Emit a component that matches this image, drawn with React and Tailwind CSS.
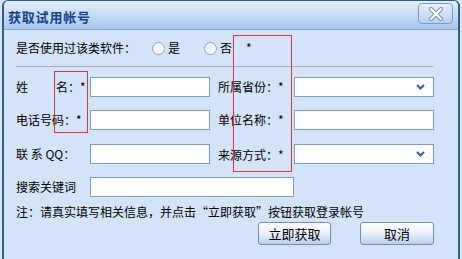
const FONT = { fontFamily: '"SimSun", "Noto Sans CJK SC", sans-serif' };

function Field({ w = 'w-[120px]' }) {
  return <div className={`${w} h-[20px] bg-white border border-[#7f9db9]`} />;
}

function Select() {
  return (
    <div className="w-[140px] h-[20px] bg-white border border-[#7f9db9] flex items-center justify-end pr-[8px]">
      <svg width="9" height="6" viewBox="0 0 9 6">
        <path d="M1 1 L4.5 4.5 L8 1" fill="none" stroke="#2d5fb0" strokeWidth="2" />
      </svg>
    </div>
  );
}

function Radio({ label }) {
  return (
    <div className="flex items-center gap-[3px]">
      <span className="w-[13px] h-[13px] rounded-full border border-[#8ea6c3] bg-gradient-to-br from-[#e8eef5] to-white" />
      <span>{label}</span>
    </div>
  );
}

function Label({ children, className = '' }) {
  return <div className={`w-[74px] shrink-0 whitespace-pre ${className}`}>{children}</div>;
}

function Button({ children, w }) {
  return (
    <div
      className={`${w} h-[23px] rounded-[3px] border border-[#6f8fbb] bg-gradient-to-b from-white via-[#e9f0fa] to-[#b9cfec] flex items-center justify-center text-[13px] text-black`}
    >
      {children}
    </div>
  );
}

export default function App() {
  return (
    <div className="w-[462px] h-[259px] bg-[#d9e6f5] overflow-hidden text-[12px] text-black" style={FONT}>
      <div className="relative ml-[2px] mr-[2px] h-[259px] rounded-t-[6px] border-x-2 border-t border-[#2e5c9a] bg-[#d3e3f8]">
        {/* title bar */}
        <div className="h-[29px] rounded-t-[5px] bg-gradient-to-b from-[#e4effc] via-[#c6dcf6] to-[#a7c5ec] border-b border-[#86a9d8] flex items-center pl-[4px]">
          <span className="text-[13px] font-bold text-[#15428b] tracking-[0.8px] mt-[3px]">获取试用帐号</span>
          <div className="ml-auto mr-[5px] self-start w-[35px] h-[21px] mt-[2px] rounded-[4px] border border-[#7d9bc4] bg-gradient-to-b from-[#e6effb] to-[#b9d0ee] flex items-center justify-center">
            <svg width="16" height="14" viewBox="0 0 16 14">
              <path d="M3 2 L13 12 M13 2 L3 12" stroke="#7d8fa8" strokeWidth="4" strokeLinecap="round" />
              <path d="M3 2 L13 12 M13 2 L3 12" stroke="#ffffff" strokeWidth="2.2" strokeLinecap="round" />
            </svg>
          </div>
        </div>

        <div className="pl-[12px]">
          <div className="h-[36px] flex items-center">
            <span className="w-[136px]">是否使用过该类软件：</span>
            <Radio label="是" />
            <div className="ml-[24px]"><Radio label="否" /></div>
            <span className="ml-[14px]">*</span>
          </div>
          <div className="w-[417px] h-px bg-[#a3acb7]" />

          <div className="mt-[10px] h-[20px] flex items-center">
            <Label>
              <span>姓</span>
              <span className="ml-[28px]">名：*</span>
            </Label>
            <Field />
            <Label className="ml-[8px] w-[76px]">所属省份：*</Label>
            <Select />
          </div>
          <div className="mt-[13px] h-[20px] flex items-center">
            <Label>电话号码：*</Label>
            <Field />
            <Label className="ml-[8px] w-[76px]">单位名称：*</Label>
            <Field w="w-[140px]" />
          </div>
          <div className="mt-[14px] h-[20px] flex items-center">
            <Label>联 系 QQ：</Label>
            <Field />
            <Label className="ml-[8px] w-[76px] pt-[2px]">来源方式：*</Label>
            <Select />
          </div>
          <div className="mt-[13px] h-[20px] flex items-center">
            <Label>搜索关键词</Label>
            <Field w="w-[204px]" />
          </div>
          <div className="mt-[7px] leading-[16px]">注：请真实填写相关信息，并点击“立即获取”按钮获取登录帐号</div>
          <div className="mt-[2px] flex">
            <div className="ml-[242px]"><Button w="w-[73px]">立即获取</Button></div>
            <div className="ml-[29px]"><Button w="w-[74px]">取消</Button></div>
          </div>
        </div>

        {/* red annotation boxes */}
        <div className="absolute left-[229px] top-[34px] w-[59px] h-[137px] shadow-[inset_0_0_0_1px_#e2323e]" />
        <div className="absolute left-[50px] top-[70px] w-[34px] h-[62px] shadow-[inset_0_0_0_1px_#e2323e]" />
      </div>
    </div>
  );
}
